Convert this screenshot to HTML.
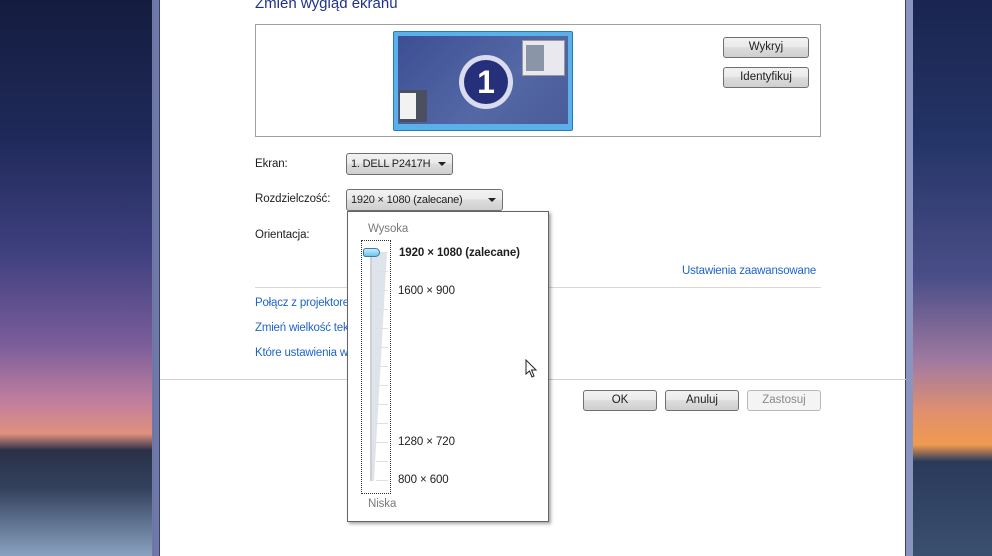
<!DOCTYPE html>
<html><head><meta charset="utf-8"><style>
*{margin:0;padding:0;box-sizing:border-box}
body{width:992px;height:556px;overflow:hidden;position:relative;font-family:"Liberation Sans",sans-serif;font-size:11.5px;color:#1e1e1e;
background:linear-gradient(180deg,#141c3e 0%,#1f2a5a 25%,#3e3f7e 45%,#7a5d9a 62%,#c07e9e 72%,#e0907e 78%,#2a3048 81%,#34425e 88%,#8aa2c0 100%)}
.bgr{position:absolute;left:913px;top:0;width:79px;height:556px;background:linear-gradient(180deg,#1a2550 0%,#243466 25%,#4a4e88 50%,#a07aa0 65%,#e0906e 74%,#f09a50 80%,#2a3a5a 83%,#3b4f6e 100%)}
.frame{position:absolute;left:152px;top:0;width:761px;height:556px;background:linear-gradient(90deg,#6e78a8,#aab4d8 40%,#8a94c0);}
.win{position:absolute;left:159px;top:0;width:747px;height:556px;background:#fff;border-left:1px solid #3a4060;border-right:1px solid #3a4060}
.a{position:absolute}
.title{left:255px;top:-5px;font-size:15px;color:#1e3287}
.box{left:255px;top:24px;width:566px;height:113px;border:1px solid #a0a0a0}
.btn{position:absolute;height:21px;border:1px solid #707070;border-radius:3px;background:linear-gradient(#f2f2f2 0%,#ebebeb 45%,#dddddd 50%,#cfcfcf 100%);text-align:center;line-height:19px;font-size:11.5px}
.lbl{position:absolute;font-size:11.5px;letter-spacing:-0.1px}
.combo{position:absolute;height:22px;border:1px solid #707070;border-radius:3px;background:linear-gradient(#f2f2f2,#ebebeb 45%,#dddddd 50%,#cfcfcf);line-height:20px;padding-left:4px;font-size:11px;letter-spacing:-0.2px}
.combo:after{content:"";position:absolute;right:6px;top:8px;border-left:4px solid transparent;border-right:4px solid transparent;border-top:4px solid #222}
.link{position:absolute;color:#1e64c8;font-size:11.5px;letter-spacing:-0.2px}
.drop{left:347px;top:211px;width:202px;height:311px;background:#fff;border:1px solid #646464;box-shadow:2px 2px 3px rgba(0,0,0,.35)}
.tick{position:absolute;left:376px;width:12px;height:1px;background:#dde0e6}
</style></head><body>
<div class="bgr"></div>
<div class="frame"></div>
<div class="win"></div>
<div class="a title">Zmień wygląd ekranu</div>
<div class="a box"></div>
<div class="a" style="left:393px;top:31px;width:180px;height:100px;background:#5ab0e8;border:1px solid #2a7ac0;border-radius:2px">
 <div class="a" style="left:4px;top:4px;width:170px;height:88px;background:linear-gradient(135deg,#3d4f93,#5468a6 60%,#4a5c98)"></div>
 <div class="a" style="left:65px;top:23px;width:54px;height:54px;border-radius:50%;background:#d8dced"></div>
 <div class="a" style="left:70px;top:28px;width:44px;height:44px;border-radius:50%;background:#262f7a;color:#fff;font-weight:bold;font-size:32px;text-align:center;line-height:44px">1</div>
 <div class="a" style="left:128px;top:8px;width:43px;height:36px;background:#e8e8ee;border:1px solid #999"><div class="a" style="left:3px;top:4px;width:18px;height:26px;background:#8a95a8"></div></div>
 <div class="a" style="left:5px;top:58px;width:28px;height:32px;background:#4a5060"><div class="a" style="left:1px;top:3px;width:16px;height:26px;background:#f2f2f2"></div></div>
</div>
<div class="btn" style="left:723px;top:37px;width:86px">Wykryj</div>
<div class="btn" style="left:723px;top:67px;width:86px">Identyfikuj</div>
<div class="lbl" style="left:255px;top:158px">Ekran:</div>
<div class="combo" style="left:346px;top:153px;width:107px">1. DELL P2417H</div>
<div class="lbl" style="left:255px;top:193px">Rozdzielczość:</div>
<div class="combo" style="left:346px;top:189px;width:157px">1920 × 1080 (zalecane)</div>
<div class="lbl" style="left:255px;top:229px">Orientacja:</div>
<div class="link" style="left:682px;top:265px">Ustawienia zaawansowane</div>
<div class="a" style="left:255px;top:287px;width:566px;height:1px;background:#d8d8d8"></div>
<div class="link" style="left:255px;top:297px">Połącz z projektorem</div>
<div class="link" style="left:255px;top:322px">Zmień wielkość tekstu</div>
<div class="link" style="left:255px;top:347px">Które ustawienia wyświetlania</div>
<div class="a" style="left:160px;top:379px;width:746px;height:1px;background:#cfcfcf"></div>
<div class="btn" style="left:583px;top:390px;width:74px">OK</div>
<div class="btn" style="left:665px;top:390px;width:74px">Anuluj</div>
<div class="btn" style="left:747px;top:390px;width:74px;color:#8a8a8a;border-color:#b8b8b8;background:#f4f4f4">Zastosuj</div>
<div class="a drop">
</div>
<div class="lbl" style="left:368px;top:223px;color:#7a7a7a">Wysoka</div>
<div class="lbl" style="left:368px;top:498px;color:#7a7a7a">Niska</div>
<div class="a" style="left:361px;top:240px;width:30px;height:254px;border:1px dotted #333"></div>
<svg class="a" style="left:362px;top:241px" width="28" height="252"><polygon points="8,12 25,12 12,240 8,240" fill="#dfe4ea"/><line x1="9" y1="12" x2="9" y2="240" stroke="#b8bcc4"/></svg>
<div class="tick" style="top:252px"></div><div class="tick" style="top:271px"></div><div class="tick" style="top:290px"></div><div class="tick" style="top:309px"></div><div class="tick" style="top:328px"></div><div class="tick" style="top:347px"></div><div class="tick" style="top:366px"></div><div class="tick" style="top:385px"></div><div class="tick" style="top:404px"></div><div class="tick" style="top:423px"></div><div class="tick" style="top:442px"></div><div class="tick" style="top:461px"></div><div class="tick" style="top:480px"></div>
<div class="a" style="left:363px;top:248px;width:17px;height:9px;border:1px solid #3a7ca8;border-radius:3px 5px 5px 3px;background:linear-gradient(#c8ecfa,#6cc4ea)"></div>
<div class="lbl" style="left:399px;top:247px;font-weight:bold">1920 × 1080 (zalecane)</div>
<div class="lbl" style="left:398px;top:285px">1600 × 900</div>
<div class="lbl" style="left:398px;top:436px">1280 × 720</div>
<div class="lbl" style="left:398px;top:474px">800 × 600</div>
<svg class="a" style="left:525px;top:359px" width="14" height="20"><path d="M1,1 L1,15 L4.5,12 L7,18 L9,17 L6.5,11 L11,11 Z" fill="#fff" stroke="#222" stroke-width="1"/></svg>
</body></html>
